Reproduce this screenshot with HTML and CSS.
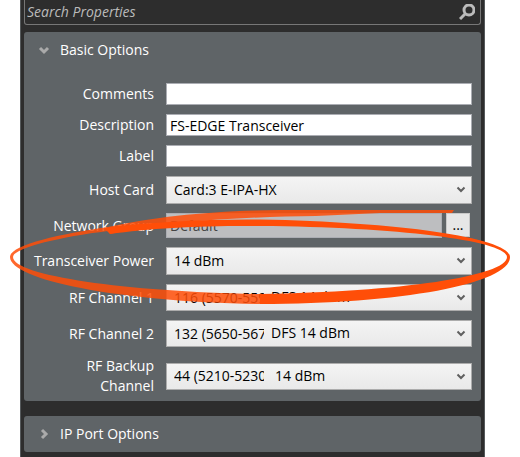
FILE: index.html
```html
<!DOCTYPE html>
<html lang="en">
<head>
	<meta charset="UTF-8">
	<meta name="viewport" content="width=device-width, initial-scale=1.0">
	<title>Properties</title>
	<link rel="stylesheet" href="styles.css">
</head>
<body>
	<div class="properties">
		<div class="search">
			<input type="text" placeholder="Search Properties" aria-label="Search Properties">
			<svg width="16" height="17" viewBox="0 0 16 17"><circle cx="10" cy="6" r="5"/><path d="M6.5 9.5L1 15"/></svg>
		</div>

		<div class="group">
			<button class="group-title" type="button">
				<svg width="12" height="12" viewBox="0 0 12 12"><path d="M2 4l4 4 4-4"/></svg>
				Basic Options
			</button>
			<div class="fields">
				<div class="row">
					<label for="comments">Comments</label>
					<input type="text" id="comments">
				</div>
				<div class="row">
					<label for="description">Description</label>
					<input type="text" id="description" value="FS-EDGE Transceiver">
				</div>
				<div class="row">
					<label for="label">Label</label>
					<input type="text" id="label">
				</div>
				<div class="row">
					<label for="host">Host Card</label>
					<div class="combo">
						<select id="host"><option>Card:3 E-IPA-HX</option></select>
						<svg width="10" height="8" viewBox="0 0 10 8"><path d="M1.5 1.5l3.5 3.5 3.5-3.5"/></svg>
					</div>
				</div>
				<div class="row">
					<label for="network">Network Group</label>
					<div class="picker">
						<input type="text" id="network" value="Default" disabled>
						<button type="button">...</button>
					</div>
				</div>
				<div class="row">
					<label for="power">Transceiver Power</label>
					<div class="combo">
						<select id="power"><option>14 dBm</option></select>
						<svg width="10" height="8" viewBox="0 0 10 8"><path d="M1.5 1.5l3.5 3.5 3.5-3.5"/></svg>
					</div>
				</div>
				<div class="row">
					<label for="channel1">RF Channel 1</label>
					<div class="combo channel">
						<select id="channel1"><option>116 (5570-5590</option></select>
						<span class="note">DFS 14 dBm</span>
						<svg width="10" height="8" viewBox="0 0 10 8"><path d="M1.5 1.5l3.5 3.5 3.5-3.5"/></svg>
					</div>
				</div>
				<div class="row">
					<label for="channel2">RF Channel 2</label>
					<div class="combo channel">
						<select id="channel2"><option>132 (5650-5670</option></select>
						<span class="note">DFS 14 dBm</span>
						<svg width="10" height="8" viewBox="0 0 10 8"><path d="M1.5 1.5l3.5 3.5 3.5-3.5"/></svg>
					</div>
				</div>
				<div class="row">
					<label for="backup">RF Backup Channel</label>
					<div class="combo channel">
						<select id="backup"><option>44 (5210-5230)</option></select>
						<span class="note indent">14 dBm</span>
						<svg width="10" height="8" viewBox="0 0 10 8"><path d="M1.5 1.5l3.5 3.5 3.5-3.5"/></svg>
					</div>
				</div>
			</div>
		</div>

		<div class="group">
			<button class="group-title" type="button">
				<svg width="12" height="12" viewBox="0 0 12 12"><path d="M4 2l4 4-4 4"/></svg>
				IP Port Options
			</button>
		</div>
	</div>

	<!-- hand drawn circle round the power setting -->
	<svg class="marker" viewBox="0 0 520 110" preserveAspectRatio="none">
		<path class="thin" d="M108 27C60 34 10 45 10 57C10 80 120 102 260 104L260 94C130 92 13 76 13 57C13 48 60 37 108 31Z"/>
		<path class="thin" d="M108 27C160 16 210 11 280 10L454 10L452 13L380 13L316 16C250 17 170 20 110 34Z"/>
		<path d="M110 34L104 28C150 22 205 19 260 19.5C400 22 510 38 510 57C510 84 400 104 260 104L260 94C400 92 507 76 507 57C507 41 400 27 260 26C205 25.5 150 28 110 34Z"/>
	</svg>
</body>
</html>
```

FILE: styles.css
```css
* {
	box-sizing: border-box;
}
body {
	margin: 0;
	background: white;
	position: relative;
	font-family: "Open Sans", "Noto Sans", sans-serif;
	font-size: 14px;
	line-height: 20px;
}
input, select, button {
	font: inherit;
	color: black;
	margin: 0;
	border-radius: 0;
}
svg {
	fill: none;
	stroke: #bbb;
	stroke-width: 2;
}
.properties {
	margin: 0 35px 0 20px;
	padding: 0 3px 6px 3px;
	background: #2d2d2d;
	border-left: 1px solid #55595b;
	border-right: 1px solid #55595b;
}
.search {
	display: flex;
	align-items: center;
	height: 25px;
	margin-bottom: 7px;
	padding-right: 5px;
	border: 1px solid #777;
	border-top: none;
	border-radius: 0 0 3px 3px;
}
.search input {
	flex: 1;
	min-width: 0;
	padding: 0 2px;
	border: none;
	background: none;
	color: #bbb;
	font-style: italic;
}
.search input::placeholder {
	color: #bbb;
}
.search svg {
	stroke-width: 3;
}
.group {
	margin-bottom: 15px;
	border-radius: 3px;
	background: #5f6467;
}
.group:last-child {
	margin-bottom: 0;
}
.group-title {
	display: flex;
	align-items: center;
	gap: 10px;
	width: 100%;
	height: 36px;
	padding: 0 14px;
	border: none;
	background: none;
	color: white;
	text-align: left;
}
.group-title svg {
	stroke-width: 3;
	stroke: #aaa;
}
.fields {
	display: flex;
	flex-direction: column;
	gap: 9px;
	padding: 15px 9px 5px 6px;
}
.row {
	display: grid;
	grid-template-columns: 124px 1fr;
	align-items: center;
	gap: 12px;
}
.row label {
	color: white;
	text-align: right;
}
.row input {
	width: 100%;
	min-width: 0;
	height: 22px;
	padding: 0 3px;
	border: 1px solid #abadb3;
	background: white;
}
.combo {
	position: relative;
}
.combo select {
	display: block;
	appearance: none;
	width: 100%;
	height: 28px;
	padding: 0 24px 0 7px;
	border: 1px solid #acacac;
	background: linear-gradient(#f4f4f4, #e9e9e9);
}
.combo svg {
	position: absolute;
	right: 6px;
	top: 10px;
	stroke: #606060;
	pointer-events: none;
}
.combo.channel select {
	height: 27px;
	padding-right: 207px;
	text-overflow: clip;
}
.note {
	position: absolute;
	left: 103px;
	top: 3px;
	padding-left: 2px;
	pointer-events: none;
}
.note.indent {
	left: 107px;
}
.picker {
	display: flex;
	gap: 4px;
	padding-right: 2px;
}
.picker .row input,
.picker input {
	flex: 1;
	height: 25px;
	background: #bdbec0;
	color: #444;
}
.picker button {
	width: 24px;
	height: 24px;
	padding: 0;
	border: 1px solid #c8c8c8;
	background: #e6e6e6;
}
.marker {
	position: absolute;
	left: 0;
	top: 200px;
	width: 100%;
	height: 110px;
	fill: #ff4e08;
	stroke: none;
	pointer-events: none;
}
.marker .thin {
	fill-opacity: 0.85;
}
```
